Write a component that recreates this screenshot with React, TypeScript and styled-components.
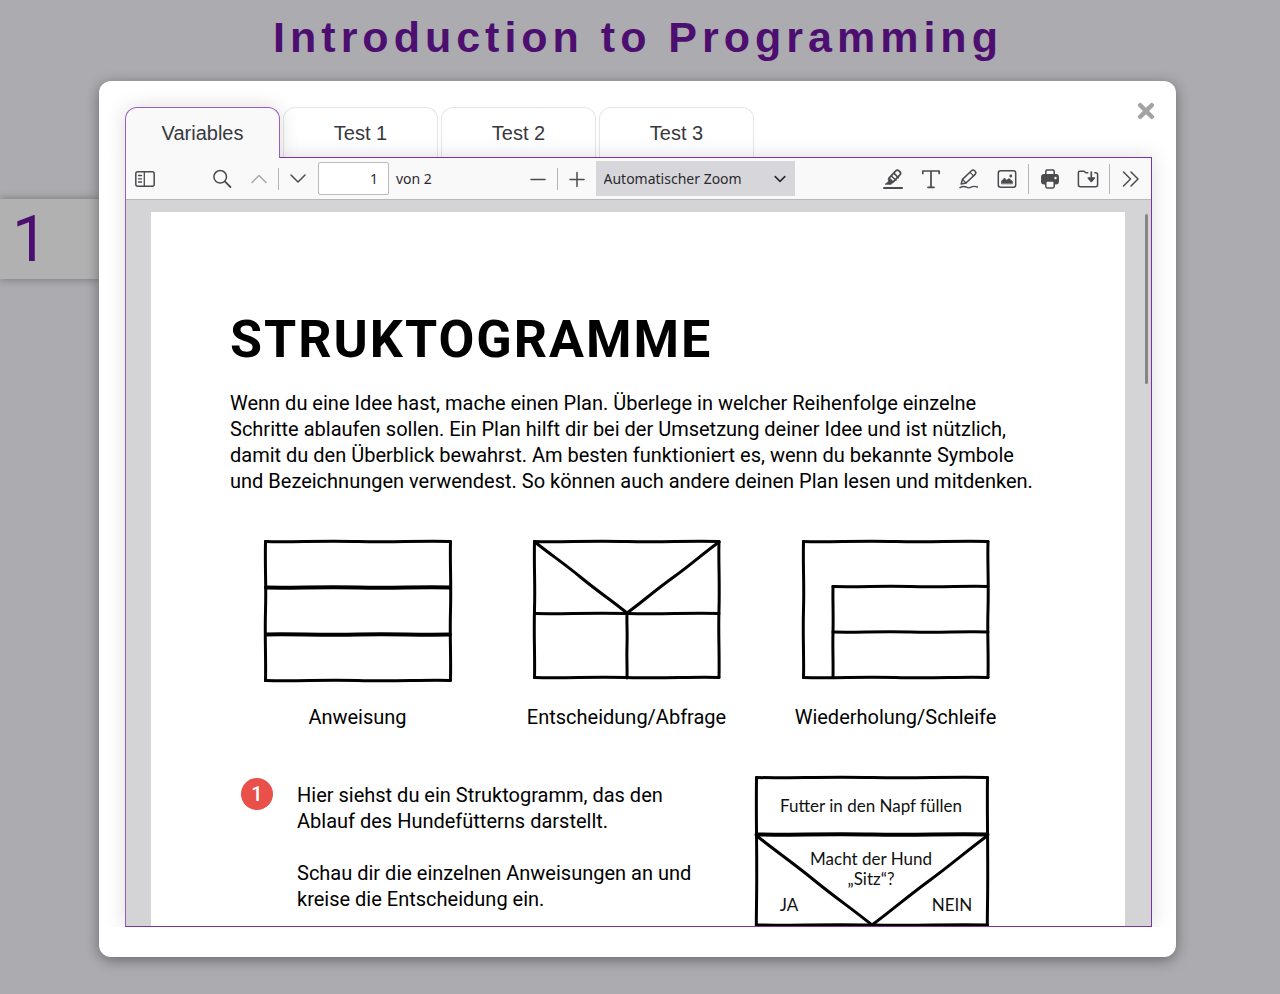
import React from "react";
import styled, { createGlobalStyle, css } from "styled-components";
import { FaTimes } from "react-icons/fa";

const GlobalStyle = createGlobalStyle`
  *, *::before, *::after { box-sizing: border-box; }
  body {
    margin: 0;
    background: #acabb0;
    font-family: "Liberation Sans", Arial, sans-serif;
  }
`;

const Page = styled.div`
  display: flex;
  flex-direction: column;
  height: 100vh;
  min-height: 600px;
  padding-bottom: 37px;
  overflow: hidden;
`;

const PageTitle = styled.h1`
  margin: 0;
  padding: 14px 4px 0 0;
  height: 81px;
  text-align: center;
  font-size: 43px;
  line-height: 46px;
  font-weight: 700;
  letter-spacing: 5px;
  color: #4c0f70;
`;

const Stage = styled.main`
  flex: 1;
  min-height: 0;
  display: flex;
  padding-right: 104px;
`;

const Chapters = styled.nav`
  width: 99px;
  padding-top: 118px;
`;

const ChapterLink = styled.a`
  display: block;
  height: 80px;
  padding-left: 12px;
  background: #b1b1b1;
  box-shadow: 0 0 8px rgba(0, 0, 0, 0.35);
  color: #4c0f70;
  font-family: Roboto, sans-serif;
  font-size: 64px;
  line-height: 82px;
  text-decoration: none;
`;

const Dialog = styled.section`
  position: relative;
  flex: 1;
  min-width: 0;
  display: flex;
  flex-direction: column;
  padding: 26px 24px 30px 26px;
  border-radius: 12px;
  background: #fff;
  box-shadow: 0 3px 14px rgba(0, 0, 0, 0.4);
`;

const CloseButton = styled.button`
  position: absolute;
  top: 18px;
  right: 18px;
  display: flex;
  padding: 0;
  border: 0;
  background: none;
  color: #a3a3a3;
  font-size: 24px;
`;

const Tabs = styled.div`
  display: flex;
  gap: 3px;
`;

const Tab = styled.button<{ $active?: boolean }>`
  width: 155px;
  height: 50px;
  padding: 1px 0 0;
  border: 1px solid #e6e6e8;
  border-bottom: 0;
  border-radius: 12px 12px 0 0;
  background: #fff;
  color: #38383d;
  font-family: inherit;
  font-size: 20px;
  ${({ $active }) =>
    $active &&
    css`
      position: relative;
      z-index: 2;
      height: 51px;
      margin-bottom: -1px;
      border-color: #9560bd;
      background: #f9f9fa;
      box-shadow: 0 0 20px rgba(0, 0, 0, 0.14);
      clip-path: polygon(
        -24px -24px,
        calc(100% + 24px) -24px,
        calc(100% + 24px) 100%,
        0 100%,
        0 calc(100% + 24px),
        -24px calc(100% + 24px)
      );
    `}
`;

const Viewer = styled.div`
  position: relative;
  z-index: 1;
  flex: 1;
  min-height: 0;
  display: flex;
  flex-direction: column;
  border: 1px solid #7a33a3;
  border-left-color: #9560bd;
  background: #d4d4d7;
  box-shadow: 0 0 20px rgba(0, 0, 0, 0.14);
  clip-path: inset(-24px -24px 0 -24px);
`;

const Toolbar = styled.div`
  flex: none;
  display: flex;
  justify-content: space-between;
  height: 42px;
  padding: 0 2px 0 1px;
  border-bottom: 1px solid #b8b8b8;
  background: #f9f9fa;
  color: #2a2a2e;
  font-family: "Noto Sans", "Open Sans", sans-serif;
  font-size: 14px;
`;

const ToolGroup = styled.div<{ $wide?: boolean }>`
  display: flex;
  align-items: center;
  gap: ${({ $wide }) => ($wide ? "2px" : "1px")};
`;

const ToolButton = styled.button<{ $spaced?: boolean }>`
  display: grid;
  place-items: center;
  width: 36px;
  height: 32px;
  margin-right: ${({ $spaced }) => ($spaced ? "40px" : "0")};
  padding: 0;
  border: 0;
  background: none;
  color: #4b4b4f;
  &:disabled { color: #a8a8aa; }
`;

const Divider = styled.span<{ $tall?: boolean }>`
  width: 1px;
  height: ${({ $tall }) => ($tall ? "30px" : "22px")};
  margin: 0 ${({ $tall }) => ($tall ? "1px" : "0")};
  background: #b4b4b6;
`;

const PageField = styled.label`
  display: flex;
  align-items: center;
  gap: 7px;
  min-width: 122px;
  padding-left: 1px;
`;

const PageInput = styled.input`
  width: 71px;
  height: 33px;
  padding: 0 10px;
  border: 1px solid #bbbbbc;
  border-radius: 2px;
  background: #fff;
  color: inherit;
  font: inherit;
  text-align: right;
`;

const ZoomBox = styled.div`
  position: relative;
  display: flex;
  align-items: center;
`;

const ZoomSelect = styled.select`
  appearance: none;
  width: 199px;
  height: 35px;
  padding: 0 32px 0 8px;
  border: 0;
  border-radius: 0;
  background: #d7d7db;
  color: inherit;
  font: inherit;
`;

const SelectArrow = styled.span`
  position: absolute;
  right: 9px;
  display: flex;
  pointer-events: none;
`;

const Pane = styled.div`
  position: relative;
  flex: 1;
  min-height: 0;
  padding: 12px 26px 0 25px;
  overflow: hidden;
`;

const ScrollThumb = styled.div`
  position: absolute;
  top: 14px;
  right: 3px;
  width: 3px;
  height: 170px;
  border-radius: 2px;
  background: #858587;
`;

const Sheet = styled.article`
  padding: 98px 79px 60px;
  min-height: 1300px;
  background: #fff;
  color: #000;
  font-family: Roboto, sans-serif;
  font-size: 20px;
  line-height: 26px;
`;

const SheetTitle = styled.h2`
  margin: 0;
  font-size: 52px;
  line-height: 60px;
  font-weight: 700;
  letter-spacing: 2px;
`;

const Intro = styled.p`
  margin: 20px 0 0;
`;

const Figures = styled.div`
  display: grid;
  grid-template-columns: repeat(3, 199px);
  column-gap: 70px;
  margin-top: 45px;
  padding-left: 28px;
`;

const Figure = styled.figure`
  display: flex;
  flex-direction: column;
  align-items: center;
  gap: 21px;
  margin: 0;
`;

const Caption = styled.figcaption`
  white-space: nowrap;
`;

const Exercise = styled.section`
  display: flex;
  align-items: flex-start;
  margin-top: 45px;
  padding-left: 11px;
`;

const Badge = styled.span`
  flex: none;
  width: 32px;
  height: 32px;
  margin: 3px 24px 0 0;
  border-radius: 50%;
  background: #e9504a;
  color: #fff;
  font-weight: 500;
  line-height: 32px;
  text-align: center;
`;

const Task = styled.div`
  width: 457px;
  padding-top: 7px;
  p { margin: 0 0 26px; }
`;

const Sketch = styled.svg`
  display: block;
  flex: none;
  fill: none;
  stroke: #000;
  stroke-width: 3;
  stroke-linecap: round;
  stroke-linejoin: round;
`;

const SketchText = styled.text`
  fill: #111;
  stroke: none;
  font-family: Lato, sans-serif;
  font-size: 17px;
  text-anchor: middle;
`;

/* A pen stroke between two points that drifts slightly to either side. */
const PenLine = ({ from, to, weight, drift = 1 }: {
  from: [number, number];
  to: [number, number];
  weight?: number;
  drift?: number;
}) => {
  const dx = to[0] - from[0];
  const dy = to[1] - from[1];
  const length = Math.hypot(dx, dy);
  const nx = (-dy / length) * drift;
  const ny = (dx / length) * drift;
  const at = (t: number, side: number) =>
    `${from[0] + dx * t + nx * side} ${from[1] + dy * t + ny * side}`;
  return (
    <path
      strokeWidth={weight}
      d={`M${at(0, 0)}C${at(0.15, 0.6)} ${at(0.3, -0.8)} ${at(0.5, 0)}S${at(0.8, -0.6)} ${at(1, 0)}`}
    />
  );
};

const PenBox = ({ right, bottom }: { right: number; bottom: number }) => (
  <>
    <PenLine from={[2.5, 2.5]} to={[right, 2.5]} drift={1.5} />
    <PenLine from={[right, 2.5]} to={[right, bottom]} />
    <PenLine from={[right, bottom]} to={[2.5, bottom]} drift={1.5} />
    <PenLine from={[2.5, bottom]} to={[2.5, 2.5]} />
  </>
);

const StatementSketch = () => (
  <Sketch width="190" height="144" viewBox="0 0 190 144">
    <PenBox right={187.5} bottom={141.5} />
    <PenLine from={[3, 48.5]} to={[187, 48.5]} weight={4} />
    <PenLine from={[3, 95.5]} to={[187, 95.5]} weight={4} drift={-1} />
  </Sketch>
);

const DecisionSketch = () => (
  <Sketch width="190" height="144" viewBox="0 0 190 144">
    <PenBox right={187} bottom={138.5} />
    <PenLine from={[3, 3]} to={[95, 74]} />
    <PenLine from={[95, 74]} to={[187, 3]} />
    <PenLine from={[2.5, 74.5]} to={[187, 74.5]} />
    <PenLine from={[95, 74.5]} to={[95, 139]} drift={0.6} />
  </Sketch>
);

const LoopSketch = () => (
  <Sketch width="190" height="144" viewBox="0 0 190 144">
    <PenBox right={187} bottom={138.5} />
    <PenLine from={[187, 47.5]} to={[32, 47.5]} />
    <PenLine from={[32, 47.5]} to={[32, 138.5]} drift={0.6} />
    <PenLine from={[32, 93]} to={[187, 93]} />
  </Sketch>
);

const FeedingSketch = () => (
  <Sketch width="236" height="260" viewBox="0 0 236 260">
    <PenBox right={233.5} bottom={258} />
    <PenLine from={[2.5, 59.5]} to={[233.5, 59.5]} weight={4} />
    <PenLine from={[3, 61]} to={[118, 150]} />
    <PenLine from={[118, 150]} to={[233, 61]} />
    <PenLine from={[2.5, 150]} to={[233.5, 150]} />
    <SketchText x="117" y="37">Futter in den Napf füllen</SketchText>
    <SketchText x="117" y="90">Macht der Hund</SketchText>
    <SketchText x="117" y="110">„Sitz“?</SketchText>
    <SketchText x="35" y="136">JA</SketchText>
    <SketchText x="198" y="136">NEIN</SketchText>
  </Sketch>
);

const Glyph = ({ children, size = 20 }: { children: React.ReactNode; size?: number }) => (
  <svg
    width={size}
    height={size}
    viewBox="0 0 20 20"
    fill="none"
    stroke="currentColor"
    strokeWidth="1.5"
    strokeLinecap="round"
    strokeLinejoin="round"
    overflow="visible"
    aria-hidden="true"
  >
    {children}
  </svg>
);

const LeftTools = () => (
  <ToolGroup>
    <ToolButton $spaced aria-label="Sidebar">
      <Glyph>
        <rect x="0.8" y="2.8" width="18.4" height="14.4" rx="2" />
        <path d="M9.3 3v14M3.5 6.5h3M3.5 9.8h3M3.5 13h3" strokeWidth="1.3" />
      </Glyph>
    </ToolButton>
    <ToolButton aria-label="Suchen">
      <Glyph>
        <circle cx="8.2" cy="7.8" r="6.3" />
        <path d="M12.8 12.4l5.6 5.6" strokeWidth="1.8" />
      </Glyph>
    </ToolButton>
    <ToolButton disabled aria-label="Zurück">
      <Glyph><path d="M3 13.5l7-7 7 7" /></Glyph>
    </ToolButton>
    <Divider />
    <ToolButton aria-label="Weiter">
      <Glyph><path d="M3 6l7 7 7-7" /></Glyph>
    </ToolButton>
    <PageField>
      <PageInput defaultValue="1" aria-label="Seite" />
      von 2
    </PageField>
  </ToolGroup>
);

const ZoomTools = () => (
  <ToolGroup>
    <ToolButton aria-label="Verkleinern">
      <Glyph><path d="M3 10.5h14" /></Glyph>
    </ToolButton>
    <Divider />
    <ToolButton aria-label="Vergrößern">
      <Glyph><path d="M3 10.5h14M10 3.5v14" /></Glyph>
    </ToolButton>
    <ZoomBox>
      <ZoomSelect aria-label="Zoom">
        <option>Automatischer Zoom</option>
      </ZoomSelect>
      <SelectArrow>
        <Glyph size={12}><path d="M2 6l8 8 8-8" strokeWidth="2.6" /></Glyph>
      </SelectArrow>
    </ZoomBox>
  </ToolGroup>
);

const RightTools = () => (
  <ToolGroup $wide>
    <ToolButton aria-label="Hervorheben">
      <Glyph>
        <path d="M1 19h18" strokeWidth="2" />
        <path d="M6 9.2l6.8-7.3c1-1 2.2-1 3.2-.1l.9.9c1 1 .9 2.2 0 3.2L10 13.2z" strokeWidth="1.7" />
        <path d="M8.6 7.2l4.3 4M11.3 4.6l4 4" />
        <path d="M5.5 9.5L10 13.5l-2 1.8H2.2l3-2.6z" fill="currentColor" strokeWidth="0.8" />
      </Glyph>
    </ToolButton>
    <ToolButton aria-label="Text">
      <Glyph><path d="M1.8 4.5V2h16.400v2.5M10 2v16M7 18.300h6" strokeWidth="1.7" /></Glyph>
    </ToolButton>
    <ToolButton aria-label="Zeichnen">
      <Glyph>
        <path d="M2.200 15l1.200-4.600L12.500 1.800c.9-.9 2.200-.9 3.100 0l.5.5c.9.9.9 2.200 0 3.100L7 14z" />
        <path d="M11 3.300l3.600 3.600M3.600 10.500L7 14" strokeWidth="1.2" />
        <path d="M1 18.600c2.500-1.600 4.600-1.400 6.500-.4 1.600.9 3 .9 4.500 0 2-1.200 4-1.100 6.500-.2" strokeWidth="1.4" />
      </Glyph>
    </ToolButton>
    <ToolButton aria-label="Bild">
      <Glyph>
        <rect x="1.3" y="1.8" width="17.4" height="16.4" rx="2.2" />
        <path d="M4.500 14.500v-2.500l3-3 2.200 2.200 2.300-1.700 3.500 2.800v2.200z" fill="currentColor" strokeWidth="0.6" />
        <circle cx="13.8" cy="7" r="1.4" fill="currentColor" stroke="none" />
      </Glyph>
    </ToolButton>
    <Divider $tall />
    <ToolButton aria-label="Drucken">
      <Glyph>
        <rect x="5.8" y="1" width="8.4" height="6" rx="1.2" />
        <rect x="1.8" y="5.8" width="16.4" height="9" rx="2.2" fill="currentColor" />
        <circle cx="15.5" cy="9" r="1.2" fill="#f9f9fa" stroke="none" />
        <rect x="5.8" y="12" width="8.4" height="7" rx="1.4" fill="#f9f9fa" />
      </Glyph>
    </ToolButton>
    <ToolButton aria-label="Speichern">
      <Glyph>
        <path d="M9.800 3.800H7.800L6.200 2.200H1.800c-.8 0-1.400.6-1.400 1.400v12.200c0 1.100.8 1.900 1.900 1.900h15.400c1.100 0 1.900-.8 1.900-1.900V5.700c0-1.100-.8-1.900-1.900-1.900h-.8" />
        <path d="M13.300 3v8.500M10.300 9l3 3.400 3-3.400z" fill="currentColor" strokeWidth="1.7" />
      </Glyph>
    </ToolButton>
    <Divider $tall />
    <ToolButton aria-label="Weitere Werkzeuge">
      <Glyph><path d="M2.500 3l7 7-7 7M10 3l7 7-7 7" /></Glyph>
    </ToolButton>
  </ToolGroup>
);

const figures = [
  { name: "Anweisung", drawing: <StatementSketch /> },
  { name: "Entscheidung/Abfrage", drawing: <DecisionSketch /> },
  { name: "Wiederholung/Schleife", drawing: <LoopSketch /> },
];

const tabs = ["Variables", "Test 1", "Test 2", "Test 3"];

export default function App() {
  return (
    <Page>
      <GlobalStyle />
      <PageTitle>Introduction to Programming</PageTitle>
      <Stage>
        <Chapters>
          <ChapterLink href="#chapter-1">1</ChapterLink>
        </Chapters>
        <Dialog role="dialog" aria-label="Variables">
          <CloseButton aria-label="Close">
            <FaTimes />
          </CloseButton>
          <Tabs role="tablist">
            {tabs.map((name, index) => (
              <Tab key={name} role="tab" aria-selected={index === 0} $active={index === 0}>
                {name}
              </Tab>
            ))}
          </Tabs>
          <Viewer>
            <Toolbar>
              <LeftTools />
              <ZoomTools />
              <RightTools />
            </Toolbar>
            <Pane>
              <Sheet>
                <SheetTitle>STRUKTOGRAMME</SheetTitle>
                <Intro>
                  Wenn du eine Idee hast, mache einen Plan. Überlege in welcher Reihenfolge einzelne
                  <br />
                  Schritte ablaufen sollen. Ein Plan hilft dir bei der Umsetzung deiner Idee und ist nützlich,
                  <br />
                  damit du den Überblick bewahrst. Am besten funktioniert es, wenn du bekannte Symbole
                  <br />
                  und Bezeichnungen verwendest. So können auch andere deinen Plan lesen und mitdenken.
                </Intro>
                <Figures>
                  {figures.map(({ name, drawing }) => (
                    <Figure key={name}>
                      {drawing}
                      <Caption>{name}</Caption>
                    </Figure>
                  ))}
                </Figures>
                <Exercise>
                  <Badge>1</Badge>
                  <Task>
                    <p>
                      Hier siehst du ein Struktogramm, das den
                      <br />
                      Ablauf des Hundefütterns darstellt.
                    </p>
                    <p>
                      Schau dir die einzelnen Anweisungen an und
                      <br />
                      kreise die Entscheidung ein.
                    </p>
                  </Task>
                  <FeedingSketch />
                </Exercise>
              </Sheet>
              <ScrollThumb />
            </Pane>
          </Viewer>
        </Dialog>
      </Stage>
    </Page>
  );
}
